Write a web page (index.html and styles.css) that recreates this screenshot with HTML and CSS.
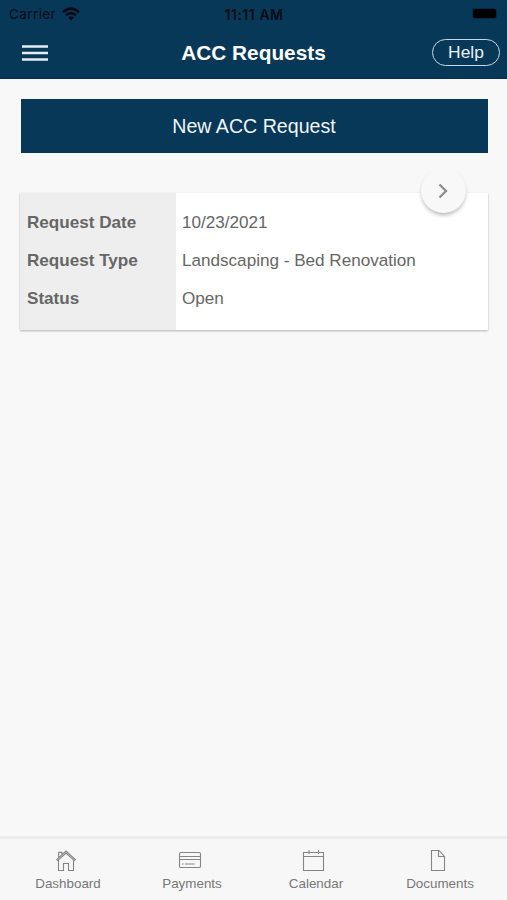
FILE: index.html
```html
<!DOCTYPE html>
<html lang="en">
<head>
<meta charset="utf-8">
<title>ACC Requests</title>
<link rel="stylesheet" href="styles.css">
</head>
<body>
<header class="header">
  <div class="status">
    <div class="carrier"><span>Carrier</span>
      <svg width="18" height="14" viewBox="0 0 18 14" fill="none" stroke="#020b14" stroke-width="2.6"><path d="M1 5.2Q9-1.8 17 5.2M4 8.3Q9 4 14 8.3"/><path d="M6.2 10.6Q9 8 11.8 10.6L9 13.4Z" fill="#020b14" stroke="none"/></svg>
    </div>
    <time class="clock">11:11 AM</time>
    <div class="battery-wrap"><i class="battery"></i></div>
  </div>
  <div class="toolbar">
    <button class="menu" aria-label="Menu"><svg width="26" height="18" viewBox="0 0 26 18" stroke="#e4edf4" stroke-width="2.6"><path d="M0 2.500h26M0 9h26M0 15.500h26"/></svg></button>
    <h1 class="title">ACC Requests</h1>
    <button class="help">Help</button>
  </div>
</header>
<main class="main">
  <button class="new-request">New ACC Request</button>
  <section class="card">
    <dl class="labels"><dt>Request Date</dt><dt>Request Type</dt><dt>Status</dt></dl>
    <dl class="values"><dd>10/23/2021</dd><dd>Landscaping - Bed Renovation</dd><dd>Open</dd></dl>
    <button class="open" aria-label="Open request"><svg width="12" height="18" viewBox="0 0 12 18" fill="none" stroke="#8c8c8c" stroke-width="2.3"><path d="M1.500 2.500 8 9 1.500 15.500"/></svg></button>
  </section>
</main>
<nav class="tabs">
  <a class="tab"><svg class="icon icon-home" viewBox="0 0 24 24"><path d="M2.7 11.6 12 3.1l9.3 8.5-1 1L12 5.1l-8.3 7.5zM4.5 12v10.5h5v-7h5v7h5V12M4.7 9.7V4.4h3.2v2.3"/></svg><span>Dashboard</span></a>
  <a class="tab"><svg class="icon icon-card" viewBox="0 0 24 24"><rect x="1.500" y="4.500" width="21" height="15" rx="1.3"/><path d="M1.500 8.500h21M1.500 11.500h21M4 16h1.600M7 16h9.500"/></svg><span>Payments</span></a>
  <a class="tab"><svg class="icon icon-calendar" viewBox="0 0 24 24"><path d="M1.500 4.500h20v18h-20zM1.500 8.500h20M7 2v4M16.500 2v4"/></svg><span>Calendar</span></a>
  <a class="tab"><svg class="icon icon-document" viewBox="0 0 24 24"><path d="M5.500 2.500h7.500l5.500 6v14h-13zM12.500 2.500v6h6"/></svg><span>Documents</span></a>
</nav>
</body>
</html>
```
FILE: styles.css
```css
* { box-sizing: border-box; }
body {
  margin: 0;
  height: 900px;
  display: flex;
  flex-direction: column;
  background: #f8f8f8;
  color: #666;
  font-family: "Liberation Sans", Arial, sans-serif;
}
button { padding: 0; border: 0; background: none; font: inherit; }
h1, dl, dd { margin: 0; }
svg { display: block; }

.header { height: 79px; background: #073858; border-bottom: 1px solid #04304e; }
.status {
  height: 27px;
  padding: 0 11px 0 9px;
  display: grid;
  grid-template-columns: 1fr auto 1fr;
  align-items: center;
  color: #020b14;
  font: 400 13.500px/27px Inter, sans-serif;
}
.carrier { display: flex; align-items: center; gap: 6px; letter-spacing: .4px; }
.clock { padding-left: 3px; font-weight: 600; letter-spacing: .55px; font-size: 14px; }
.clock, .carrier span { position: relative; top: 1px; }
.battery-wrap { display: flex; justify-content: flex-end; }
.battery { width: 23px; height: 9px; border-radius: 2px; background: #000; box-shadow: 0 0 0 1px #052b44; }
.toolbar {
  height: 51px;
  padding: 0 7px 0 22px;
  display: grid;
  grid-template-columns: 68px 1fr 68px;
  align-items: center;
}
.menu { width: 26px; height: 18px; }
.title { margin-right: 15px; color: #fff; text-align: center; font-size: 20.800px; line-height: 24px; }
.help {
  width: 68px;
  height: 27px;
  border: 1.500px solid #c5d8e5;
  border-radius: 14px;
  color: #e7f0f7;
  font-size: 17.400px;
}

.main { flex: 1; padding: 20px 19px 0 20px; }
.new-request {
  display: block;
  width: 467px;
  height: 54px;
  margin-left: .5px;
  background: #073858;
  color: #f0f6fa;
  font-size: 19.600px;
}
.card {
  position: relative;
  display: flex;
  height: 137px;
  margin-top: 40px;
  background: #fff;
  box-shadow: 0 1px 2px rgba(0, 0, 0, .28);
  font-size: 17.100px;
  line-height: 38px;
}
.labels { width: 156px; padding: 11px 7px; background: #eee; font-weight: 700; }
.values { padding: 11px 6px; }
.open {
  position: absolute;
  top: -25px;
  right: 22px;
  width: 45px;
  height: 45px;
  display: grid;
  place-items: center;
  border-radius: 50%;
  background: #f8f8f8;
  box-shadow: 0 3px 4px -1px rgba(0, 0, 0, .3);
}

.tabs {
  height: 64px;
  padding: 8px 5px 0 6px;
  display: grid;
  grid-template-columns: repeat(4, 1fr);
  border-top: 3px solid #ececec;
  background: #f7f7f7;
}
.tab { display: flex; flex-direction: column; align-items: center; color: #777; font-size: 13.400px; line-height: 18px; }
.icon { width: 24px; height: 24px; margin: 1px 4px 3px 0; fill: none; stroke: #858585; stroke-width: 1.1; }
```
